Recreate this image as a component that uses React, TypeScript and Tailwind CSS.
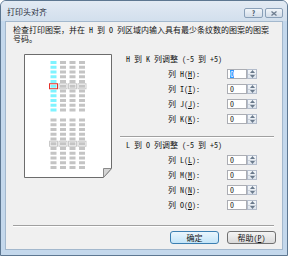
import React from "react";

const font = "font-['Noto_Sans_Mono_CJK_SC','Noto_Sans_CJK_SC',sans-serif]";

const cols = [26.5, 36, 45.5, 55];
const groups = [7, 64.5];

function Pattern() {
  const cells: React.ReactNode[] = [];
  groups.forEach((gy, g) => {
    for (let i = 0; i < 11; i++) {
      const y = gy + i * 4.75;
      cols.forEach((x, c) => {
        const cyan = g === 0 && c === 0;
        cells.push(
          <rect key={`c${g}-${i}-${c}`} x={x} y={y} width={6} height={3} fill={cyan ? "#7ff3ff" : "#c4c4c4"} />
        );
        if (i === 5) {
          cells.push(
            <rect
              key={`b${g}-${c}`}
              x={x - 1}
              y={y - 1}
              width={8}
              height={5}
              fill="none"
              stroke={cyan ? "#e5302a" : "#c9c9c9"}
              strokeWidth={1}
            />
          );
        }
      });
    }
  });
  return (
    <svg width="88" height="124" viewBox="0 0 88 124" className="shrink-0">
      <path d="M0.5 0.5 H87.5 V114.5 L79.5 123.5 H0.5 Z" fill="#ffffff" stroke="#6c6c6c" />
      <path d="M79.5 114.5 H87.5 L79.5 123.5 Z" fill="#d4d4d4" stroke="#8a8a8a" />
      {cells}
    </svg>
  );
}

function Spinner() {
  return (
    <div className="w-[10px] h-[10px] flex flex-col border border-[#b3bccb] bg-linear-to-b from-[#f4f7fa] to-[#dde4ec]">
      <div className="flex-1 flex items-center justify-center border-b border-[#c8d0da]">
        <svg width="5" height="3" viewBox="0 0 5 3">
          <path d="M2.5 0 L5 3 L0 3 Z" fill="#6a7a8c" />
        </svg>
      </div>
      <div className="flex-1 flex items-center justify-center">
        <svg width="5" height="3" viewBox="0 0 5 3">
          <path d="M0 0 L5 0 L2.5 3 Z" fill="#6a7a8c" />
        </svg>
      </div>
    </div>
  );
}

function Row({ col, selected }: { col: string; selected?: boolean }) {
  return (
    <div className="flex items-center h-[10px] pl-[48px]">
      <span className="w-[59px] text-[8px] leading-[10px]">
        列 {col}(<span className="underline">{col}</span>):
      </span>
      <div className="w-[20px] h-[10px] bg-white border border-[#abadb3] flex items-center pl-[2px]">
        <span
          className={
            selected
              ? "bg-[#3399ff] text-white text-[8px] leading-[8px]"
              : "text-[8px] leading-[8px]"
          }
        >
          0
        </span>
      </div>
      <Spinner />
    </div>
  );
}

function Separator({ className }: { className?: string }) {
  return (
    <div className={"h-[2px] border-t border-[#a0a0a0] border-b border-b-white " + (className ?? "")} />
  );
}

export default function App() {
  return (
    <div className={`w-[288px] h-[256px] bg-white text-[#141414] ${font}`}>
      <div className="w-full h-full flex flex-col rounded-t-[6px] border border-[#5d7791] bg-[#c4d8ec]">
        {/* title bar */}
        <div className="h-[20px] flex items-start pl-[6px] pr-[4px] rounded-t-[5px] bg-linear-to-b from-[#e2eaf3] to-[#d2dfed]">
          <span className="mt-[6px] text-[8px] leading-[10px] text-[#1e2a36]">打印头对齐</span>
          <div className="ml-auto mt-[7px] flex gap-[2px]">
            <div className="w-[19px] h-[10px] rounded-[2px] border border-[#8aa0b8] bg-linear-to-b from-[#f1f5f9] to-[#d3dde9] flex items-center justify-center text-[7px] leading-[8px] font-bold text-[#4a5a6c]">
              ?
            </div>
            <div className="w-[18px] h-[10px] rounded-[2px] border border-[#8aa0b8] bg-linear-to-b from-[#f1f5f9] to-[#d3dde9] flex items-center justify-center">
              <svg width="6" height="5" viewBox="0 0 6 5">
                <path d="M0.5 0.5 L5.5 4.5 M5.5 0.5 L0.5 4.5" stroke="#6d7d8f" strokeWidth="1.3" />
              </svg>
            </div>
          </div>
        </div>
        {/* client */}
        <div className="flex-1 mx-[4px] mb-[5px] border border-[#a3b8cd] bg-[#f0f0f0] flex flex-col">
          <p className="pt-[3px] pl-[7px] text-[8px] leading-[9px] whitespace-nowrap">
            检查打印图案，并在 H 到 O 列区域内输入具有最少条纹数的图案的图案
            <br />
            号码。
          </p>
          <div className="mt-[11px] flex pl-[18px]">
            <Pattern />
            <div className="ml-[8px] w-[154px] flex flex-col">
              <div className="pl-[6px] text-[8px] leading-[10px]">H 到 K 列调整 (-5 到 +5)</div>
              <div className="mt-[5px] flex flex-col gap-[5px]">
                <Row col="H" selected />
                <Row col="I" />
                <Row col="J" />
                <Row col="K" />
              </div>
              <Separator className="mt-[12px]" />
              <div className="mt-[2px] pl-[6px] text-[8px] leading-[10px]">L 到 O 列调整 (-5 到 +5)</div>
              <div className="mt-[5px] flex flex-col gap-[5px]">
                <Row col="L" />
                <Row col="M" />
                <Row col="N" />
                <Row col="O" />
              </div>
            </div>
          </div>
          <div className="mt-auto pb-[5px] flex flex-col">
            <Separator className="ml-[7px] mr-[8px]" />
            <div className="mt-[4px] flex justify-end gap-[8px] pr-[6px]">
              <button className="w-[49px] h-[13px] rounded-[3px] border border-[#3c7fb1] bg-linear-to-b from-[#eaf6fd] to-[#c4e5f8] text-[8px] leading-[11px] text-[#141414]">
                确定
              </button>
              <button className="w-[49px] h-[13px] rounded-[3px] border border-[#707070] bg-linear-to-b from-[#f4f4f4] to-[#dadada] text-[8px] leading-[11px] text-[#141414]">
                帮助(<span className="underline">P</span>)
              </button>
            </div>
          </div>
        </div>
      </div>
    </div>
  );
}
